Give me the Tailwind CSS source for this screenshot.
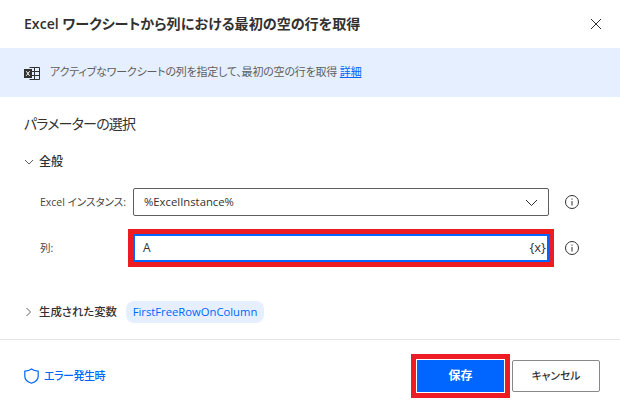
<!DOCTYPE html>
<html lang="ja">
<head>
  <meta charset="UTF-8">
  <title>Excel ワークシートから列における最初の空の行を取得</title>
  <script src="https://cdn.jsdelivr.net/npm/@tailwindcss/browser@4"></script>
</head>
<body class="bg-white font-['Open_Sans','Noto_Sans_CJK_JP',sans-serif] text-[#323130] [font-feature-settings:'palt']">
  <div class="relative flex h-[412px] w-[620px] flex-col overflow-hidden">
    <!-- Header -->
    <header class="flex h-[48px] items-center justify-between pl-[24px] pr-[18px]">
      <h1 class="text-[14.100px] font-semibold">Excel ワークシートから列における最初の空の行を取得</h1>
      <svg class="h-[12px] w-[12px] text-[#323130]" viewBox="0 0 12 12" fill="none" stroke="currentColor" stroke-width="1"><path d="M1 1l10 10M11 1L1 11"/></svg>
    </header>

    <!-- Info banner -->
    <div class="flex h-[49px] items-center bg-[#e5efff] pl-[24px]">
      <svg class="mr-[10px] h-[16px] w-[16px]" viewBox="0 0 16 16" fill="none">
        <path d="M5.500 2.500h10v12h-10M5.500 6.500h10M5.500 10.500h10M10.500 2.500v12" stroke="#323130"/>
        <rect x="0" y="4" width="8" height="9" fill="#323130"/>
        <path d="M2.200 6.200l3.400 4.600M5.600 6.200l-3.400 4.600" stroke="#fff"/>
      </svg>
      <p class="text-[11px] tracking-[-0.2px] text-[#605e5c]">アクティブなワークシートの列を指定して、最初の空の行を取得 <a href="#" class="text-[#0066ff] underline">詳細</a></p>
    </div>

    <!-- Parameters -->
    <main class="flex-1 pl-[24px]">
      <h2 class="mt-[16px] h-[22px] text-[14px] leading-[22px] tracking-[-0.8px] text-[#323130]">パラメーターの選択</h2>

      <div class="mt-[18px] flex h-[18px] items-center">
        <svg class="h-[8px] w-[10px] text-[#605e5c]" viewBox="0 0 10 8" fill="none" stroke="currentColor"><path d="M1 2l4 4 4-4"/></svg>
        <span class="ml-[5px] text-[12px] font-medium">全般</span>
      </div>

      <div class="mt-[17px] flex items-center">
        <label class="w-[109px] whitespace-nowrap pl-[16px] pt-[1px] text-[10.500px] text-[#484644]">Excel インスタンス:</label>
        <div class="flex h-[28px] w-[416px] items-center justify-between rounded-[2px] border border-[#605e5c] pl-[10px] pr-[10px] pt-[1px] text-[11.300px]">
          <span>%ExcelInstance%</span>
          <svg class="h-[8px] w-[13px]" viewBox="0 0 13 8" fill="none" stroke="#323130"><path d="M1 1l5.500 5.500L12 1"/></svg>
        </div>
        <svg class="ml-[15px] h-[16px] w-[16px] text-[#323130]" viewBox="0 0 16 16" fill="none" stroke="currentColor"><circle cx="8" cy="8" r="6.500"/><path d="M8 7v4.500M8 4.500v1.200"/></svg>
      </div>

      <div class="mt-[18px] flex items-center">
        <label class="w-[109px] pl-[16px] pt-[1px] text-[10.500px] text-[#484644]">列:</label>
        <div class="flex h-[28px] w-[416px] items-center justify-between border-2 border-[#0066ff] pl-[8px] pr-[1px] text-[12px] outline-[5px] outline-[#ed1c24]">
          <span>A</span>
          <span class="text-[13px]">{x}</span>
        </div>
        <svg class="ml-[15px] h-[16px] w-[16px] text-[#323130]" viewBox="0 0 16 16" fill="none" stroke="currentColor"><circle cx="8" cy="8" r="6.500"/><path d="M8 7v4.500M8 4.500v1.200"/></svg>
      </div>

      <div class="mt-[39px] flex items-center">
        <svg class="h-[10px] w-[9px] text-[#605e5c]" viewBox="0 0 9 10" fill="none" stroke="currentColor"><path d="M2.500 1l4 4-4 4"/></svg>
        <span class="ml-[6px] text-[11.400px] font-medium">生成された変数</span>
        <span class="ml-[9px] flex h-[22px] w-[138px] items-center justify-center rounded-[8px] bg-[#e5efff] text-[11.250px] text-[#0066ff]">FirstFreeRowOnColumn</span>
      </div>
    </main>

    <!-- Footer -->
    <footer class="flex h-[73px] items-center justify-between border-t border-[#e6e6e6] pl-[24px] pr-[20px]">
      <a href="#" class="flex items-center gap-[5px] text-[11px] font-medium tracking-[-0.5px] text-[#0066ff]">
        <svg class="h-[16px] w-[15px]" viewBox="0 0 15 16" fill="none" stroke="currentColor" stroke-width="1.200"><path d="M7.500 1C5.600 2.500 3.500 3 .8 3.200v5C.8 11.500 3.600 14 7.500 15.300c3.900-1.300 6.700-3.800 6.700-7.100v-5C11.500 3 9.400 2.500 7.500 1z"/></svg>
        エラー発生時
      </a>
      <div class="flex items-center gap-[7px]">
        <button class="h-[34px] w-[89px] border border-white bg-[#0066ff] text-[12px] font-bold text-white outline-[5px] outline-[#ed1c24]">保存</button>
        <button class="h-[32px] w-[88px] rounded-[2px] border border-[#8a8886] bg-white text-[10.800px] font-medium text-[#323130]">キャンセル</button>
      </div>
    </footer>
  </div>
</body>
</html>
